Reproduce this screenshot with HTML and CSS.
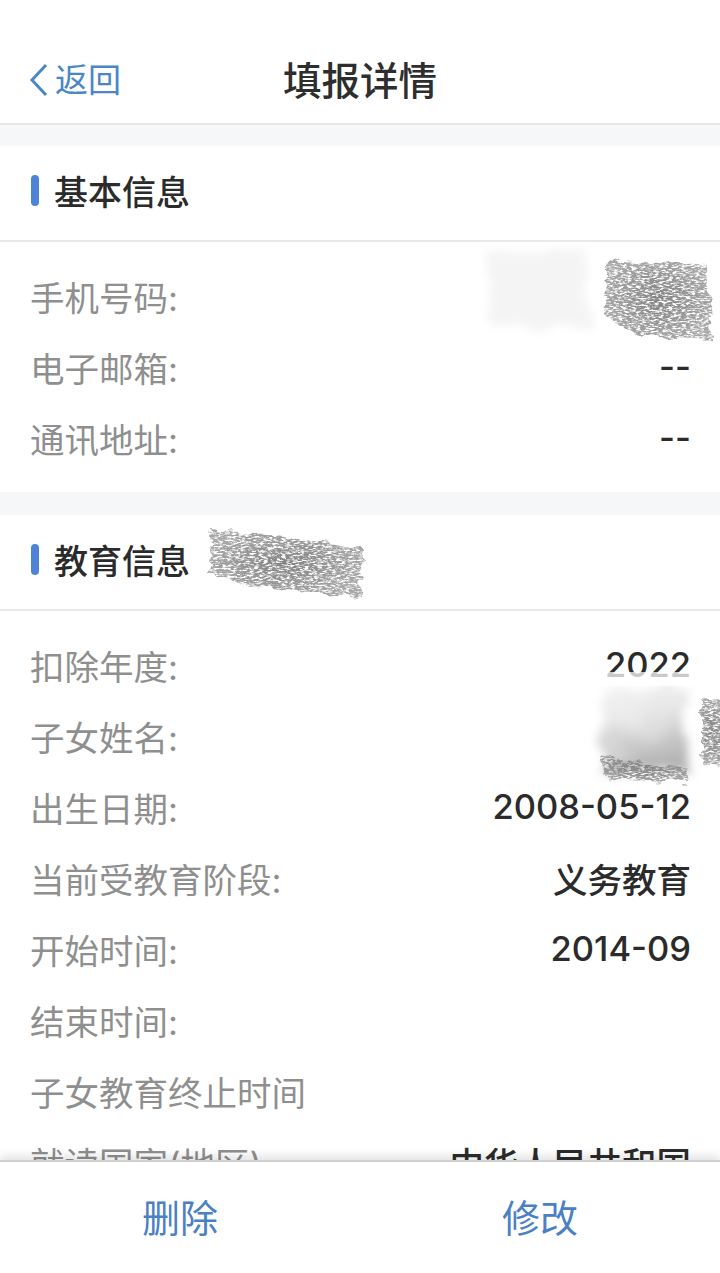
FILE: index.html
```html
<!DOCTYPE html>
<html lang="zh-CN">
<head>
    <meta charset="UTF-8">
    <title>填报详情</title>
    <meta name="viewport" content="width=device-width, initial-scale=1.0">
    <link rel="stylesheet" href="styles.css">
</head>
<body>
    <!-- pencil scribble filters used by the redaction marks -->
    <svg class="defs" width="0" height="0">
        <filter id="scribble" x="-10%" y="-10%" width="120%" height="120%">
            <feTurbulence type="fractalNoise" baseFrequency="0.06 0.12" numOctaves="2" seed="7" result="wobble"/>
            <feDisplacementMap in="SourceGraphic" in2="wobble" scale="14" result="shape"/>
            <feTurbulence type="fractalNoise" baseFrequency="0.22 0.6" numOctaves="3" seed="4"/>
            <feColorMatrix type="matrix" values="0 0 0 0 0.22  0 0 0 0 0.22  0 0 0 0 0.22  2.8 2.8 0 0 -2.05"/>
            <feComposite in2="shape" operator="in"/>
        </filter>
        <filter id="smudge" x="-15%" y="-15%" width="130%" height="130%">
            <feTurbulence type="fractalNoise" baseFrequency="0.04" numOctaves="2" seed="3" result="wobble"/>
            <feDisplacementMap in="SourceGraphic" in2="wobble" scale="20"/>
            <feGaussianBlur stdDeviation="5"/>
        </filter>
        <linearGradient id="fade" x1="0" y1="0" x2="0.3" y2="1">
            <stop offset="0" stop-color="#f6f6f6"/>
            <stop offset="0.5" stop-color="#e6e6e6"/>
            <stop offset="1" stop-color="#b4b4b4"/>
        </linearGradient>
        <radialGradient id="lead">
            <stop offset="0" stop-color="#000"/>
            <stop offset="1" stop-color="#000" stop-opacity="0.7"/>
        </radialGradient>
    </svg>

    <div class="page">
        <header class="nav">
            <a class="back">
                <svg width="20" height="34" viewBox="0 0 20 34"><path d="M17 2 L3 17 L17 32" fill="none" stroke="#4a86c8" stroke-width="3"/></svg>
                返回
            </a>
            <h1>填报详情</h1>
        </header>

        <main class="content">
            <section class="card">
                <h2 class="card-title">基本信息</h2>
                <div class="rows">
                    <div class="row"><span class="label">手机号码:</span></div>
                    <div class="row"><span class="label">电子邮箱:</span><span class="value">--</span></div>
                    <div class="row"><span class="label">通讯地址:</span><span class="value">--</span></div>
                </div>
            </section>

            <section class="card">
                <h2 class="card-title">教育信息</h2>
                <div class="rows">
                    <div class="row"><span class="label">扣除年度:</span><span class="value">2022</span></div>
                    <div class="row"><span class="label">子女姓名:</span></div>
                    <div class="row"><span class="label">出生日期:</span><span class="value">2008-05-12</span></div>
                    <div class="row"><span class="label">当前受教育阶段:</span><span class="value">义务教育</span></div>
                    <div class="row"><span class="label">开始时间:</span><span class="value">2014-09</span></div>
                    <div class="row"><span class="label">结束时间:</span></div>
                    <div class="row"><span class="label">子女教育终止时间</span></div>
                    <div class="row"><span class="label">就读国家(地区)</span><span class="value">中华人民共和国</span></div>
                </div>
            </section>
        </main>

        <footer class="actions">
            <a>删除</a>
            <a>修改</a>
        </footer>

        <!-- redaction marks, drawn over the page -->
        <svg class="redact" width="720" height="1273" viewBox="0 0 720 1273">
            <g filter="url(#smudge)">
                <path d="M484 252 L585 250 L590 328 L490 326 Z" fill="#f4f4f4"/>
                <path d="M604 688 L686 686 L688 770 L600 772 Z" fill="url(#fade)"/>
            </g>
            <rect class="wipe" x="600" y="672" width="100" height="14"/>
            <g filter="url(#scribble)" fill="url(#lead)">
                <path d="M608 258 L708 266 L712 340 L640 336 L604 316 Z"/>
                <path d="M212 530 L362 546 L360 596 L260 588 L208 574 Z"/>
                <path d="M600 756 L690 770 L686 782 L606 778 Z"/>
                <path d="M702 698 L724 698 L724 766 L702 764 Z"/>
            </g>
        </svg>
    </div>
</body>
</html>
```

FILE: styles.css
```css
* {
    box-sizing: border-box;
}

body {
    margin: 0;
    background-color: #fff;
    font-family: 'Inter', 'Noto Sans CJK SC', sans-serif;
    color: #2b2b2b;
}

.defs {
    position: absolute;
}

.page {
    position: relative;
    display: flex;
    flex-direction: column;
    height: 1273px;
    overflow: hidden;
}

.nav {
    position: relative;
    display: flex;
    align-items: center;
    justify-content: center;
    flex: none;
    height: 125px;
    padding-top: 32px;
    border-bottom: 2px solid #e6e6e6;
}

.nav h1 {
    margin: 0;
    font-size: 38.5px;
    font-weight: 500;
    color: #2e2e2e;
}

.back {
    position: absolute;
    left: 29px;
    top: 60px;
    display: flex;
    align-items: center;
    gap: 6px;
    font-size: 33px;
    line-height: 40px;
    color: #4a86c8;
}

.content {
    flex: 1;
    min-height: 0;
    overflow: hidden;
    padding-top: 21px;
    background-color: #f6f7f9;
}

.card {
    margin-bottom: 23px;
    background-color: #fff;
}

.card-title {
    display: flex;
    align-items: center;
    gap: 15px;
    height: 96px;
    margin: 0;
    padding: 0 31px 5px;
    border-bottom: 2px solid #e8e8e8;
    font-size: 34px;
    font-weight: 500;
    color: #2b2b2b;
}

.card-title::before {
    content: "";
    width: 8px;
    height: 31px;
    border-radius: 4px;
    background-color: #4d84d6;
}

.rows {
    padding: 18px 29px 19px 30px;
}

.row {
    display: flex;
    align-items: center;
    justify-content: space-between;
    height: 71px;
    font-size: 34.5px;
}

.label {
    color: #8f8f8f;
}

.value {
    color: #2b2b2b;
    font-weight: 500;
}

.actions {
    position: relative;
    display: grid;
    grid-template-columns: 1fr 1fr;
    flex: none;
    height: 113px;
    padding-bottom: 4px;
    border-top: 2px solid #d0d0d0;
    background-color: #fff;
    box-shadow: 0 -5px 8px rgba(0, 0, 0, 0.1);
    font-size: 38px;
    color: #4a80c4;
}

.actions a {
    display: flex;
    align-items: center;
    justify-content: center;
}

.redact {
    position: absolute;
    left: 0;
    top: 0;
    pointer-events: none;
}

.wipe {
    fill: #fff;
    opacity: 0.75;
}
```
